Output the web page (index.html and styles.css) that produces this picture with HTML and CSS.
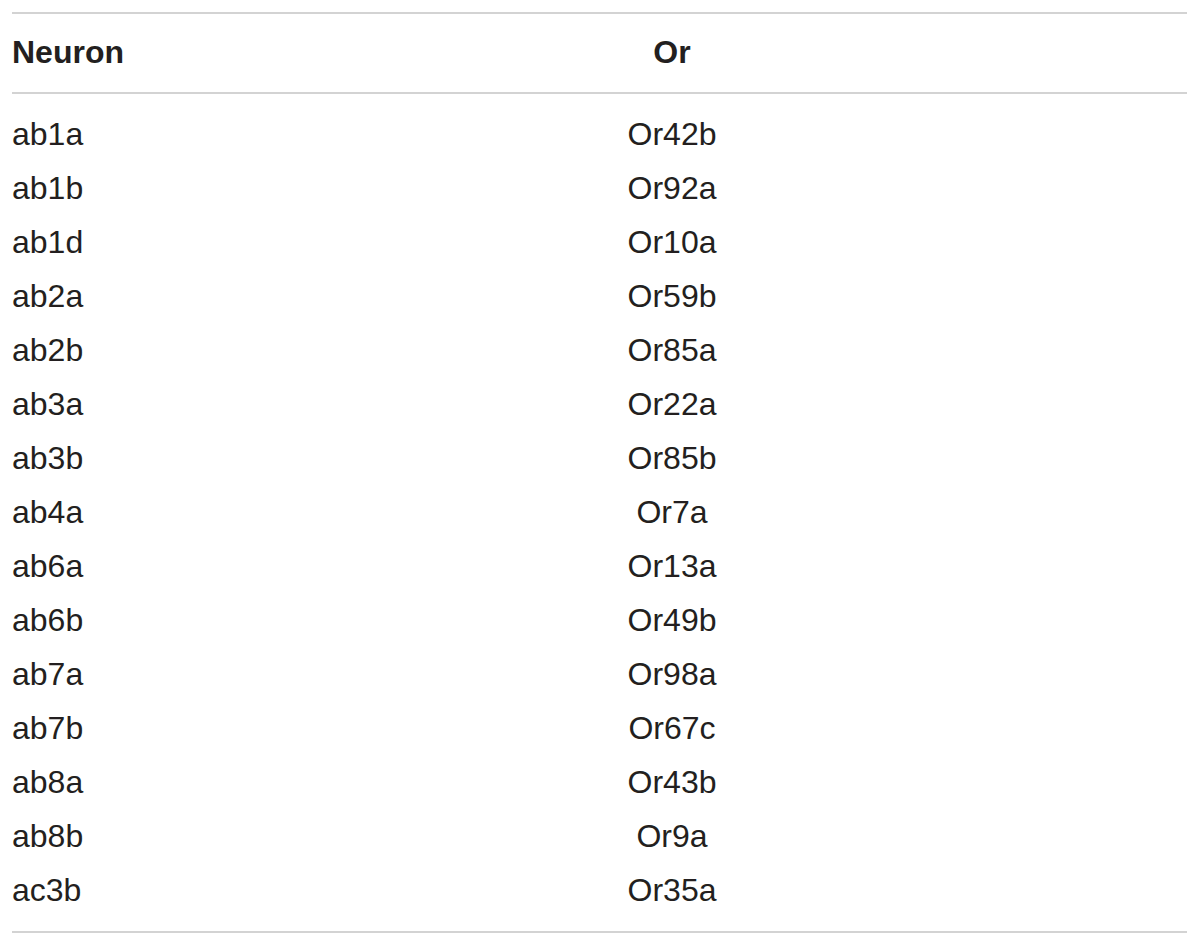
FILE: index.html
```html
<!DOCTYPE html>
<html>
<head>
<meta charset="utf-8">
<link rel="stylesheet" href="styles.css">
</head>
<body>
<div class="table">
  <div class="head row">
    <div class="c1">Neuron</div>
    <div class="c2">Or</div>
  </div>
  <div class="body">
    <div class="row"><div class="c1">ab1a</div><div class="c2">Or42b</div></div>
    <div class="row"><div class="c1">ab1b</div><div class="c2">Or92a</div></div>
    <div class="row"><div class="c1">ab1d</div><div class="c2">Or10a</div></div>
    <div class="row"><div class="c1">ab2a</div><div class="c2">Or59b</div></div>
    <div class="row"><div class="c1">ab2b</div><div class="c2">Or85a</div></div>
    <div class="row"><div class="c1">ab3a</div><div class="c2">Or22a</div></div>
    <div class="row"><div class="c1">ab3b</div><div class="c2">Or85b</div></div>
    <div class="row"><div class="c1">ab4a</div><div class="c2">Or7a</div></div>
    <div class="row"><div class="c1">ab6a</div><div class="c2">Or13a</div></div>
    <div class="row"><div class="c1">ab6b</div><div class="c2">Or49b</div></div>
    <div class="row"><div class="c1">ab7a</div><div class="c2">Or98a</div></div>
    <div class="row"><div class="c1">ab7b</div><div class="c2">Or67c</div></div>
    <div class="row"><div class="c1">ab8a</div><div class="c2">Or43b</div></div>
    <div class="row"><div class="c1">ab8b</div><div class="c2">Or9a</div></div>
    <div class="row"><div class="c1">ac3b</div><div class="c2">Or35a</div></div>
  </div>
</div>
</body>
</html>
```
FILE: styles.css
```css
html, body {
  margin: 0;
  padding: 0;
  background: #ffffff;
}
body {
  padding: 12px 13px 0 12px;
  font-family: "Liberation Sans", Arial, sans-serif;
  color: #231f20;
}
.table {
  border-top: 2px solid #d3d3d3;
  border-bottom: 2px solid #d3d3d3;
}
.row {
  display: grid;
  grid-template-columns: 145px 1fr;
  font-size: 32px;
  line-height: 54px;
}
.c2 {
  text-align: center;
}
.head {
  font-weight: bold;
  line-height: 40px;
  padding: 18px 0 20px;
  border-bottom: 2px solid #d3d3d3;
}
.body {
  padding: 13px 0 14px;
}
```
